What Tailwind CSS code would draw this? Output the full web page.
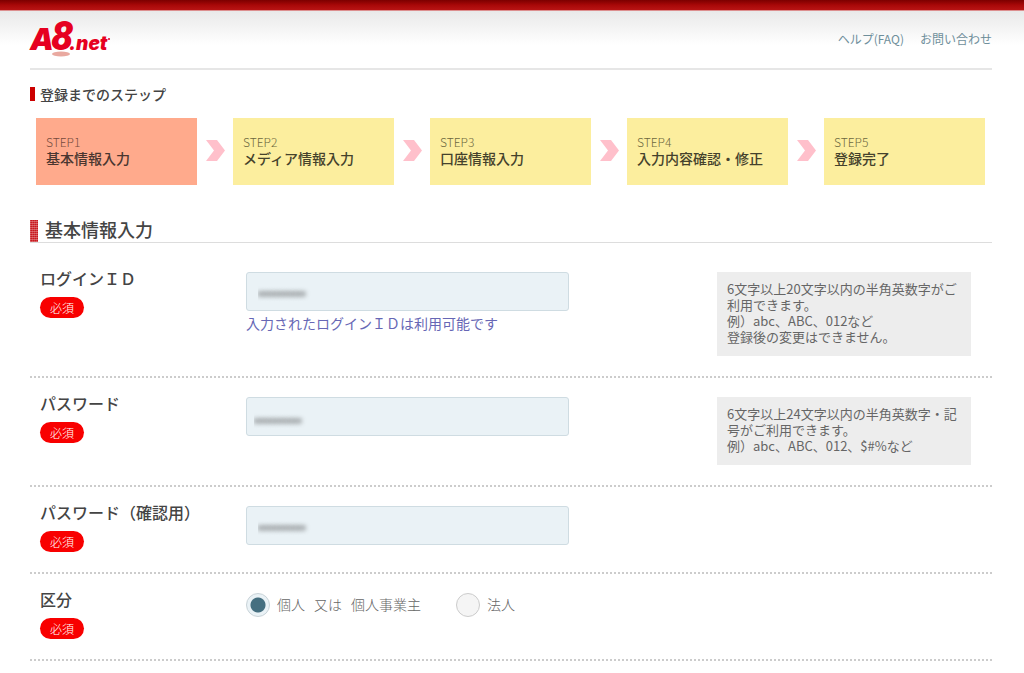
<!DOCTYPE html>
<html lang="ja">
<head>
<meta charset="utf-8">
<meta name="viewport" content="width=device-width, initial-scale=1">
<title>A8.net 基本情報入力</title>
<script src="https://cdn.jsdelivr.net/npm/@tailwindcss/browser@4"></script>
</head>
<body class="bg-white font-['Noto_Sans_CJK_JP',sans-serif] text-[#666]">
<div class="h-[11px] border-b border-[#dc8f8f] bg-linear-to-b from-[#7c0000] via-[#a80808] to-[#b81414]"></div>
<div class="bg-linear-to-b from-[#e9e9e9] to-white to-[34px] pl-[30px] pr-8">
  <header class="flex h-[59px] items-center justify-between border-b-2 border-[#e6e6e6]">
    <a href="#" aria-label="A8.net">
      <svg class="h-11 w-[84px] overflow-visible" viewBox="0 0 84 44" font-weight="900" font-style="italic" fill="#e60020">
        <ellipse cx="31" cy="36" rx="9" ry="2.500" fill="#e9a9a0"/>
        <text x="0" y="32" font-family="Inter, sans-serif" font-size="30">A</text>
        <text x="21" y="32" font-family="Roboto, sans-serif" font-size="40">8</text>
        <text x="39" y="32" font-family="Inter, sans-serif" font-size="19">.net</text>
        <circle cx="79" cy="21" r="1"/>
      </svg>
    </a>
    <nav class="flex gap-4 pb-[2px] text-[12px] leading-4 text-[#6f8f9b]">
      <a href="#">ヘルプ(FAQ)</a>
      <a href="#">お問い合わせ</a>
    </nav>
  </header>

  <main>
    <h2 class="mt-4 flex items-center gap-[5px] text-[14px] leading-4 font-medium text-[#444]"><span class="h-[14px] w-[5px] bg-[#c00]"></span>登録までのステップ</h2>
    <ol class="ml-[6px] mr-[7px] mt-4 flex items-center">
      <li class="h-[67px] flex-1 bg-[#ffaa8c] px-[10px] pt-4 leading-4"><p class="text-[12px] font-light text-[#764a3c]">STEP1</p><p class="text-[14px] font-medium text-[#4a3630]">基本情報入力</p></li>
      <li class="flex w-9 justify-center pb-[2px]" aria-hidden="true"><svg class="h-[21px] w-[19px] fill-[#ffc0cb]" viewBox="0 0 19 21"><path d="M0 0H11L19 10.500L11 21H0L8 10.500Z"/></svg></li>
      <li class="h-[67px] flex-1 bg-[#fcee9e] px-[10px] pt-4 leading-4"><p class="text-[12px] font-light text-[#6d683f]">STEP2</p><p class="text-[14px] font-medium text-[#45422c]">メディア情報入力</p></li>
      <li class="flex w-9 justify-center pb-[2px]" aria-hidden="true"><svg class="h-[21px] w-[19px] fill-[#ffc0cb]" viewBox="0 0 19 21"><path d="M0 0H11L19 10.500L11 21H0L8 10.500Z"/></svg></li>
      <li class="h-[67px] flex-1 bg-[#fcee9e] px-[10px] pt-4 leading-4"><p class="text-[12px] font-light text-[#6d683f]">STEP3</p><p class="text-[14px] font-medium text-[#45422c]">口座情報入力</p></li>
      <li class="flex w-9 justify-center pb-[2px]" aria-hidden="true"><svg class="h-[21px] w-[19px] fill-[#ffc0cb]" viewBox="0 0 19 21"><path d="M0 0H11L19 10.500L11 21H0L8 10.500Z"/></svg></li>
      <li class="h-[67px] flex-1 bg-[#fcee9e] px-[10px] pt-4 leading-4"><p class="text-[12px] font-light text-[#6d683f]">STEP4</p><p class="text-[14px] font-medium text-[#45422c]">入力内容確認・修正</p></li>
      <li class="flex w-9 justify-center pb-[2px]" aria-hidden="true"><svg class="h-[21px] w-[19px] fill-[#ffc0cb]" viewBox="0 0 19 21"><path d="M0 0H11L19 10.500L11 21H0L8 10.500Z"/></svg></li>
      <li class="h-[67px] flex-1 bg-[#fcee9e] px-[10px] pt-4 leading-4"><p class="text-[12px] font-light text-[#6d683f]">STEP5</p><p class="text-[14px] font-medium text-[#45422c]">登録完了</p></li>
    </ol>

    <h1 class="mt-[35px] flex gap-[7px] border-b border-[#ddd] text-[18px] leading-[18px] font-medium text-[#444]"><span class="h-[22px] w-2 bg-[#c8191e] bg-[repeating-linear-gradient(0deg,#ffffff44_0px_1px,transparent_1px_2px),repeating-linear-gradient(90deg,#ffffff22_0px_1px,transparent_1px_2px)]"></span>基本情報入力</h1>

    <form class="mt-[10px]">
      <div class="flex border-b-2 border-dotted border-[#ccc] pb-5">
        <div class="flex w-[206px] flex-col items-start gap-[11px] pt-[17px] pl-[10px]">
          <label for="login" class="text-[16px] leading-4 font-medium text-[#444]">ログインＩＤ</label>
          <span class="rounded-full bg-[#f80000] px-[10px] text-[12px] leading-[21px] font-light text-white">必須</span>
        </div>
        <div class="min-w-0 flex-1 pt-[19px] pl-[10px]">
          <input id="login" type="password" value="1234567890" class="block h-[39px] w-full max-w-[323px] rounded-[3px] border border-[#cfdce2] bg-[#eaf2f6] px-[11px] text-[14px] text-transparent text-shadow-[0_0_5px_#444]">
          <p class="mt-1 text-[14px] leading-4 text-[#6767b5]">入力されたログインＩＤは利用可能です</p>
        </div>
        <p class="mt-[19px] mr-[21px] w-[254px] self-start bg-[#ededed] px-[10px] pt-[9px] pb-[11px] text-[13px] leading-4">6文字以上20文字以内の半角英数字がご利用できます。<br>例）abc、ABC、012など<br>登録後の変更はできません。</p>
      </div>

      <div class="flex border-b-2 border-dotted border-[#ccc] pb-5">
        <div class="flex w-[206px] flex-col items-start gap-[11px] pt-[17px] pl-[10px]">
          <label for="password" class="text-[16px] leading-4 font-medium text-[#444]">パスワード</label>
          <span class="rounded-full bg-[#f80000] px-[10px] text-[12px] leading-[21px] font-light text-white">必須</span>
        </div>
        <div class="min-w-0 flex-1 pt-[19px] pl-[10px]">
          <input id="password" type="password" value="1234567890" class="block h-[39px] w-full max-w-[323px] rounded-[3px] border border-[#cfdce2] bg-[#eaf2f6] px-[7px] pt-1 text-[14px] text-transparent text-shadow-[0_0_5px_#444]">
        </div>
        <p class="mt-[19px] mr-[21px] w-[254px] self-start bg-[#ededed] px-[10px] pt-[9px] pb-[11px] text-[13px] leading-4">6文字以上24文字以内の半角英数字・記号がご利用できます。<br>例）abc、ABC、012、$#%など</p>
      </div>

      <div class="flex border-b-2 border-dotted border-[#ccc] pb-5">
        <div class="flex w-[206px] flex-col items-start gap-[11px] pt-[17px] pl-[10px]">
          <label for="confirm" class="text-[16px] leading-4 font-medium text-[#444]">パスワード（確認用）</label>
          <span class="rounded-full bg-[#f80000] px-[10px] text-[12px] leading-[21px] font-light text-white">必須</span>
        </div>
        <div class="min-w-0 flex-1 pt-[19px] pl-[10px]">
          <input id="confirm" type="password" value="1234567890" class="block h-[39px] w-full max-w-[323px] rounded-[3px] border border-[#cfdce2] bg-[#eaf2f6] px-[11px] text-[14px] text-transparent text-shadow-[0_0_5px_#444]">
        </div>
      </div>

      <fieldset class="border-b-2 border-dotted border-[#ccc] pb-5" aria-labelledby="kubun">
        <div class="flex">
          <div class="flex w-[206px] flex-col items-start gap-[11px] pt-[17px] pl-[10px]">
            <span id="kubun" class="text-[16px] leading-4 font-medium text-[#444]">区分</span>
            <span class="rounded-full bg-[#f80000] px-[10px] text-[12px] leading-[21px] font-light text-white">必須</span>
          </div>
          <div class="mt-[19px] flex h-6 min-w-0 flex-1 items-center gap-[35px] pl-[10px] text-[14px] leading-4 font-light">
            <label class="flex items-center gap-[7px]"><input type="radio" name="kubun" checked class="size-6 appearance-none rounded-full border border-[#c9d3d8] bg-[#eaf2f6] bg-[radial-gradient(circle,#456f80_7px,transparent_8px)]"><span class="flex gap-[9px] pb-[2px]"><span>個人</span><span>又は</span><span>個人事業主</span></span></label>
            <label class="flex items-center gap-[7px]"><input type="radio" name="kubun" class="size-6 appearance-none rounded-full border border-[#ccc] bg-[#f5f5f5]"><span class="pb-[2px]">法人</span></label>
          </div>
        </div>
      </fieldset>
    </form>
  </main>
</div>
</body>
</html>
